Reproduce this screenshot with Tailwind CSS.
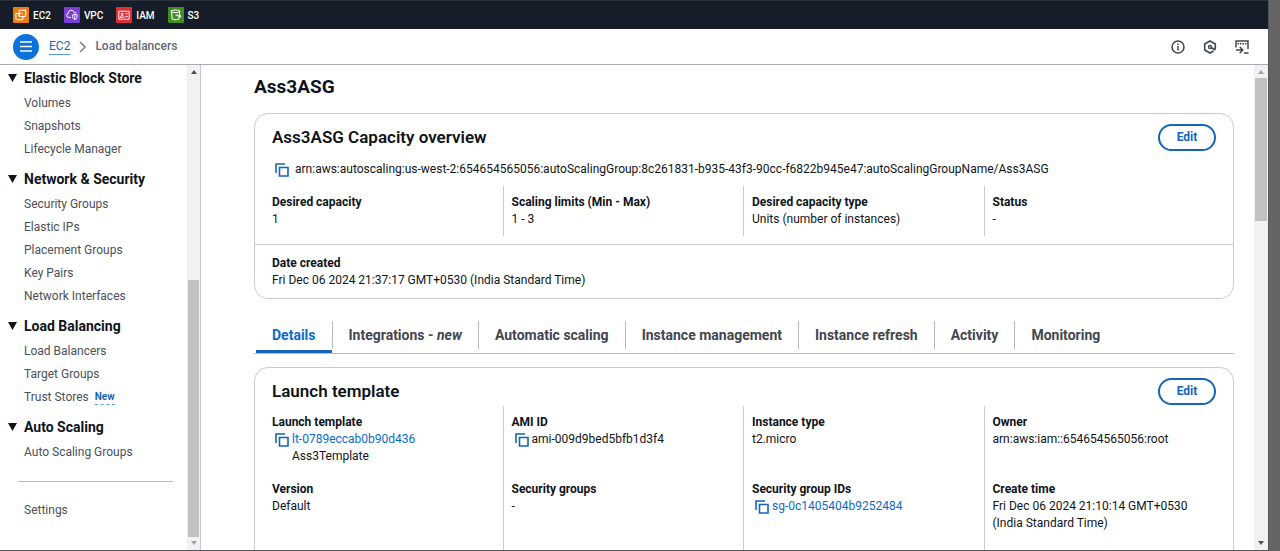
<!DOCTYPE html>
<html lang="en">
<head>
<meta charset="utf-8">
<title>Ass3ASG | EC2</title>
<script src="https://cdn.jsdelivr.net/npm/@tailwindcss/browser@4"></script>
</head>
<body class="h-screen overflow-hidden bg-[#656565] pr-[11px] text-xs leading-[17px] text-[#0f141a] font-['Roboto','Noto_Sans',sans-serif]">
<svg class="hidden" aria-hidden="true">
  <symbol id="copy" viewBox="0 0 14 14"><path d="M1 10V1h9M4.500 4.500H13V13H4.500Z" fill="none" stroke="currentColor" stroke-width="1.600"/></symbol>
  <symbol id="up" viewBox="0 0 6 4"><path d="M0 4 3 0l3 4Z" fill="currentColor"/></symbol>
  <symbol id="down" viewBox="0 0 6 4"><path d="M0 0h6L3 4Z" fill="currentColor"/></symbol>
  <symbol id="caret" viewBox="0 0 9 8"><path d="M0 0h9L4.500 8Z" fill="currentColor"/></symbol>
</svg>
<div class="flex h-full flex-col border-r border-b border-[#55555c] bg-white">

  <nav aria-label="Favorites" class="flex h-[29px] shrink-0 items-center gap-[13px] border-t border-[#2c323c] bg-[#161d28] pl-[13px] text-[10px] font-medium text-white">
    <a href="#" class="flex items-center gap-1">
      <svg class="size-4" viewBox="0 0 17 17"><rect width="17" height="17" rx="1" fill="#ed7d13"/><g fill="none" stroke="#fff" stroke-width="1.100"><rect x="6.500" y="3.500" width="7" height="6.500" rx="1"/><path d="M10.500 10v2.500a1 1 0 0 1-1 1H4a1 1 0 0 1-1-1V8a1 1 0 0 1 1-1h2.500"/><path d="M6.500 10V7h3.500"/></g></svg>
      EC2</a>
    <a href="#" class="flex items-center gap-1">
      <svg class="size-4" viewBox="0 0 17 17"><rect width="17" height="17" rx="1" fill="#7c3fd6"/><g fill="none" stroke="#fff" stroke-width="1"><path d="M7.500 11H5a2 2 0 0 1-.5-4C4.500 4.500 6 3.500 7.500 3.500S10 4 10.500 5.500c1.500-.5 2.500.5 2.500 1.500"/><path d="M11.500 7.500 9 8.500c0 3 .5 4 2.500 5 2-1 2.500-2 2.500-5ZM11.500 7.500v6"/></g></svg>
      VPC</a>
    <a href="#" class="flex items-center gap-1">
      <svg class="size-4" viewBox="0 0 17 17"><rect width="17" height="17" rx="1" fill="#dd2f3a"/><g fill="none" stroke="#fff" stroke-width="1"><path d="M3 4.500h11v8.500H3Z"/><circle cx="6.500" cy="7.500" r="1"/><path d="M4.500 11c0-2.500 4-2.500 4 0ZM10 7h2.500M10 10h2.500"/></g></svg>
      IAM</a>
    <a href="#" class="flex items-center gap-1">
      <svg class="size-4" viewBox="0 0 17 17"><rect width="17" height="17" rx="1" fill="#3f8f24"/><g fill="none" stroke="#fff" stroke-width="1.100"><ellipse cx="8" cy="4.500" rx="4.500" ry="1.300"/><path d="m3.500 4.500 1 8c.5 1.300 6.500 1.300 7 0l1-8M8 8l5 2.500c1.200-.3.500-1.500-1-2"/></g></svg>
      S3</a>
  </nav>

  <header class="flex h-9 shrink-0 items-center border-b border-[#a9adb3] pr-[19px] pl-[13px]">
    <button aria-label="Open menu" class="grid size-[26px] place-items-center rounded-full bg-[#0a72d8] text-white">
      <svg class="h-[11px] w-3" viewBox="0 0 12 11"><path d="M0 1h12M0 5.500h12M0 10h12" stroke="currentColor" stroke-width="1.700"/></svg>
    </button>
    <nav aria-label="Breadcrumbs" class="ml-[10px] flex items-center">
      <a href="#" class="border-b border-[#5b9bd8] leading-[15px] text-[#1566b8]">EC2</a>
      <svg class="mx-[9px] h-3 w-[7px] text-[#80858f]" viewBox="0 0 7 12"><path d="m1 1 5 5-5 5" fill="none" stroke="currentColor" stroke-width="1.700"/></svg>
      <span class="font-medium text-[#656871]">Load balancers</span>
    </nav>
    <div class="ml-auto flex items-center gap-[18px] text-[#424650]">
      <button aria-label="Info"><svg class="size-[14px]" viewBox="0 0 14 14"><circle cx="7" cy="7" r="6" fill="none" stroke="currentColor" stroke-width="1.500"/><path d="M7 6v4.500M7 3.500V5" stroke="currentColor" stroke-width="1.500"/></svg></button>
      <button aria-label="Settings"><svg class="size-[14px]" viewBox="0 0 14 14"><path d="M12.300 9V4L7 1 1.700 4v6L7 13l3.500-2" fill="none" stroke="currentColor" stroke-width="1.600"/><path d="M12.500 10 8 7.500" stroke="currentColor" stroke-width="1.600"/><circle cx="7" cy="7" r="1.500" fill="none" stroke="currentColor" stroke-width="1.400"/></svg></button>
      <button aria-label="CloudShell"><svg class="size-[14px]" viewBox="0 0 14 14"><g fill="none" stroke="currentColor" stroke-width="1.500"><path d="M1 7.500V1h12v8M1 10h6.500M4.800 7 7.800 10l-3 3M9 13h4.500"/><path d="M2.500 3.700h9" stroke-dasharray="1.500 1"/></g></svg></button>
    </div>
  </header>

  <div class="flex min-h-0 flex-1">
    <aside class="flex w-[201px] shrink-0 border-r border-[#c3c6cb]">
      <nav aria-label="EC2 sections" class="flex-1 overflow-hidden pt-[1px] pl-2 leading-[23px] text-[#4b505a] [&_a]:block [&_ul]:mb-[6px] [&_ul]:pt-[2px] [&_ul]:pl-4">
        <h3 class="flex h-6 items-center gap-[7px] text-sm font-bold text-[#0f141a]"><svg class="h-2 w-[9px]"><use href="#caret"/></svg>Elastic Block Store</h3>
        <ul>
          <li><a href="#">Volumes</a></li>
          <li><a href="#">Snapshots</a></li>
          <li><a href="#">Lifecycle Manager</a></li>
        </ul>
        <h3 class="flex h-6 items-center gap-[7px] text-sm font-bold text-[#0f141a]"><svg class="h-2 w-[9px]"><use href="#caret"/></svg>Network &amp; Security</h3>
        <ul>
          <li><a href="#">Security Groups</a></li>
          <li><a href="#">Elastic IPs</a></li>
          <li><a href="#">Placement Groups</a></li>
          <li><a href="#">Key Pairs</a></li>
          <li><a href="#">Network Interfaces</a></li>
        </ul>
        <h3 class="flex h-6 items-center gap-[7px] text-sm font-bold text-[#0f141a]"><svg class="h-2 w-[9px]"><use href="#caret"/></svg>Load Balancing</h3>
        <ul>
          <li><a href="#">Load Balancers</a></li>
          <li><a href="#">Target Groups</a></li>
          <li class="flex items-center gap-[6px]"><a href="#">Trust Stores</a><button class="border-b border-dashed border-[#5b9bd8] text-[10px] leading-[14px] font-bold text-[#1566b8]">New</button></li>
        </ul>
        <h3 class="flex h-6 items-center gap-[7px] text-sm font-bold text-[#0f141a]"><svg class="h-2 w-[9px]"><use href="#caret"/></svg>Auto Scaling</h3>
        <ul>
          <li><a href="#">Auto Scaling Groups</a></li>
        </ul>
        <hr class="mt-[17px] mr-[14px] ml-[10px] border-[#b8bbc1]">
        <a href="#" class="mt-[17px] ml-4">Settings</a>
      </nav>
      <div aria-hidden="true" class="flex w-[13px] flex-col items-center bg-[#f1f1f1] pt-[5px] pb-[5px] text-[#505050]">
        <svg class="h-1 w-[6px]"><use href="#up"/></svg>
        <div class="mt-auto mb-1 h-[257px] w-[11px] bg-[#c1c1c1]"></div>
        <svg class="h-1 w-[6px] text-[#a3a3a3]"><use href="#down"/></svg>
      </div>
    </aside>

    <main class="min-w-0 flex-1 overflow-hidden pt-[10px] pr-5 pl-[53px]">
      <h1 class="text-[19px] leading-6 font-bold">Ass3ASG</h1>

      <section class="mt-[14px] rounded-[14px] border border-[#c9ccd1]">
        <div class="flex items-center justify-between px-[17px] pt-[10px]">
          <h2 class="pb-[2px] text-[17px] leading-[22px] font-semibold">Ass3ASG Capacity overview</h2>
          <button class="h-[27px] w-[58px] rounded-full border-2 border-[#1566b8] font-bold text-[#1566b8]">Edit</button>
        </div>
        <div class="mt-[10px] flex items-center gap-[6px] pl-5">
          <button aria-label="Copy ARN" class="text-[#1566b8]"><svg class="size-[14px]"><use href="#copy"/></svg></button>
          <span>arn:aws:autoscaling:us-west-2:654654565056:autoScalingGroup:8c261831-b935-43f3-90cc-f6822b945e47:autoScalingGroupName/Ass3ASG</span>
        </div>
        <dl class="mr-[9px] ml-[7px] mt-2 grid grid-cols-4 *:min-h-[50px] *:border-l *:border-[#c9ccd1] *:py-2 *:pl-2 [&_dt]:font-bold">
          <div class="border-transparent! pl-[9px]!"><dt>Desired capacity</dt><dd>1</dd></div>
          <div><dt>Scaling limits (Min - Max)</dt><dd>1 - 3</dd></div>
          <div><dt>Desired capacity type</dt><dd>Units (number of instances)</dd></div>
          <div><dt>Status</dt><dd>-</dd></div>
        </dl>
        <dl class="mt-2 border-t border-[#c9ccd1] px-[17px] pt-[10px] pb-[9px]">
          <dt class="font-bold">Date created</dt>
          <dd>Fri Dec 06 2024 21:37:17 GMT+0530 (India Standard Time)</dd>
        </dl>
      </section>

      <div role="tablist" class="mt-[18px] flex h-[37px] border-b border-[#b8bbc1] text-sm font-bold text-[#424650] *:flex *:items-center *:whitespace-nowrap">
        <button role="tab" aria-selected="true" class="ml-[2px] border-b-3 border-[#1566b8] px-4 pt-[2px] text-[#0a6bcb]">Details</button>
        <button role="tab"><span class="border-l border-[#b8bbc1] px-4 py-1">Integrations - <i>new</i></span></button>
        <button role="tab"><span class="border-l border-[#b8bbc1] px-4 py-1">Automatic scaling</span></button>
        <button role="tab"><span class="border-l border-[#b8bbc1] px-4 py-1">Instance management</span></button>
        <button role="tab"><span class="border-l border-[#b8bbc1] px-4 py-1">Instance refresh</span></button>
        <button role="tab"><span class="border-l border-[#b8bbc1] px-4 py-1">Activity</span></button>
        <button role="tab"><span class="border-l border-[#b8bbc1] px-4 py-1">Monitoring</span></button>
      </div>

      <section class="mt-[13px] rounded-[14px] border border-[#c9ccd1]">
        <div class="flex items-center justify-between px-[17px] pt-[10px]">
          <h2 class="pb-[2px] text-[17px] leading-[22px] font-semibold">Launch template</h2>
          <button class="h-[27px] w-[58px] rounded-full border-2 border-[#1566b8] font-bold text-[#1566b8]">Edit</button>
        </div>
        <div class="mr-[9px] ml-[7px] mt-[1px] grid grid-cols-4 *:border-l *:border-[#c9ccd1] *:py-2 *:pl-2 [&_dt]:font-bold [&_dl>div]:min-h-[67px]">
          <dl class="min-h-[160px] border-transparent! pl-[9px]!">
            <div class="min-h-[67px]"><dt>Launch template</dt><dd class="flex gap-[3px] pl-[3px]"><button aria-label="Copy launch template" class="flex pt-[2px] text-[#1566b8]"><svg class="size-[14px]"><use href="#copy"/></svg></button><span><a href="#" class="text-[#0a6bcb]">lt-0789eccab0b90d436</a><br>Ass3Template</span></dd></div>
            <div><dt>Version</dt><dd>Default</dd></div>
          </dl>
          <dl>
            <div class="min-h-[67px]"><dt>AMI ID</dt><dd class="flex gap-[3px] pl-[3px]"><button aria-label="Copy AMI ID" class="flex pt-[2px] text-[#1566b8]"><svg class="size-[14px]"><use href="#copy"/></svg></button>ami-009d9bed5bfb1d3f4</dd></div>
            <div><dt>Security groups</dt><dd>-</dd></div>
          </dl>
          <dl>
            <div class="min-h-[67px]"><dt>Instance type</dt><dd>t2.micro</dd></div>
            <div><dt>Security group IDs</dt><dd class="flex gap-[3px] pl-[3px]"><button aria-label="Copy security group ID" class="flex pt-[2px] text-[#1566b8]"><svg class="size-[14px]"><use href="#copy"/></svg></button><a href="#" class="text-[#0a6bcb]">sg-0c1405404b9252484</a></dd></div>
          </dl>
          <dl>
            <div class="min-h-[67px]"><dt>Owner</dt><dd>arn:aws:iam::654654565056:root</dd></div>
            <div><dt>Create time</dt><dd>Fri Dec 06 2024 21:10:14 GMT+0530<br>(India Standard Time)</dd></div>
          </dl>
        </div>
      </section>
    </main>

    <div aria-hidden="true" class="flex w-[14px] shrink-0 flex-col items-center bg-[#f1f1f1] pt-[5px] pb-[5px] text-[#505050]">
      <svg class="h-1 w-[6px] text-[#a3a3a3]"><use href="#up"/></svg>
      <div class="mt-1 mb-auto h-[143px] w-3 bg-[#c1c1c1]"></div>
      <svg class="h-1 w-[6px]"><use href="#down"/></svg>
    </div>
  </div>
</div>
</body>
</html>
